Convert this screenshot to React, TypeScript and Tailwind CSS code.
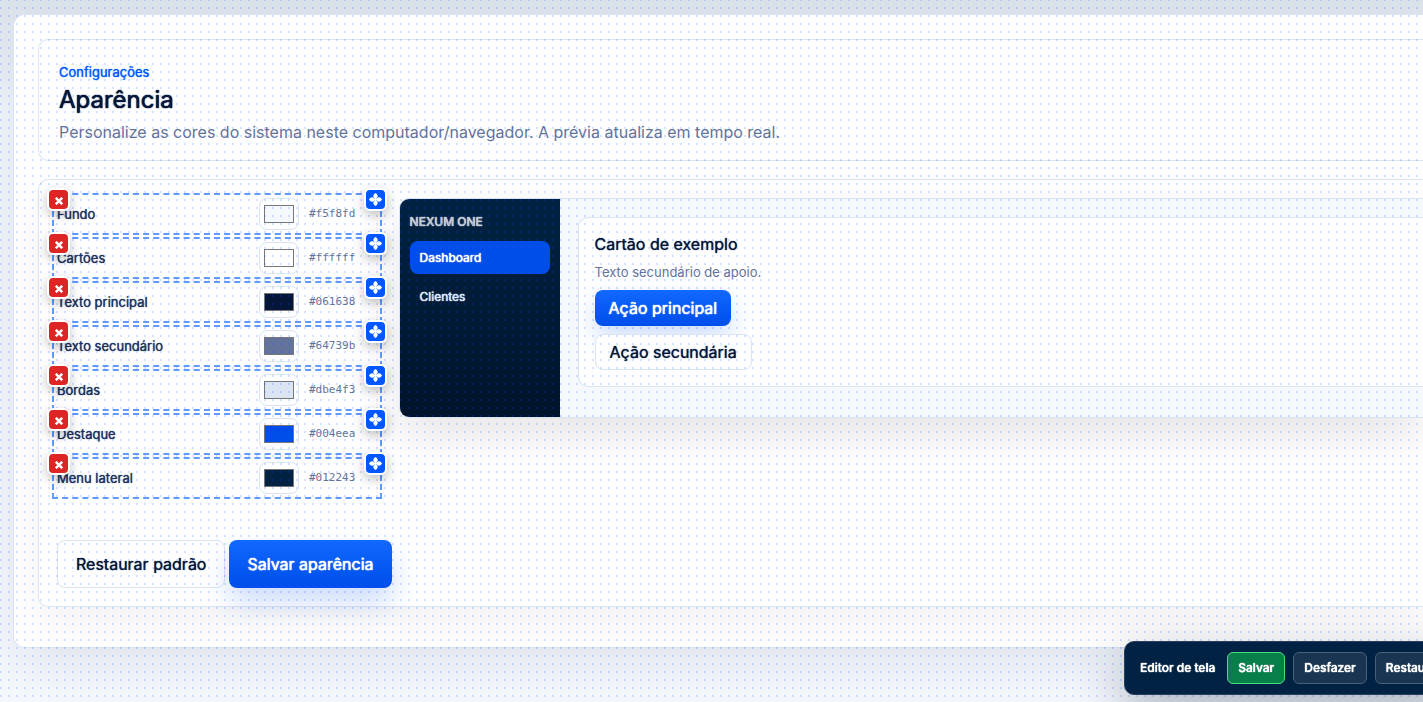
interface ThemeColor {
  id: string
  label: string
  value: string
}

const colors: ThemeColor[] = [
  { id: "fundo", label: "Fundo", value: "#f5f8fd" },
  { id: "cartoes", label: "Cartões", value: "#ffffff" },
  { id: "texto-principal", label: "Texto principal", value: "#061638" },
  { id: "texto-secundario", label: "Texto secundário", value: "#64739b" },
  { id: "bordas", label: "Bordas", value: "#dbe4f3" },
  { id: "destaque", label: "Destaque", value: "#004eea" },
  { id: "menu-lateral", label: "Menu lateral", value: "#012243" },
]

// peso extra sem mudar a largura das letras
const strong = "[text-shadow:0_0_1px_currentColor]"
const strongLight = "[text-shadow:0_0_1px_currentColor,0_0_1px_currentColor]"

function ColorRow({ id, label, value }: ThemeColor) {
  return (
    <div className="relative grid h-8 w-80 grid-cols-[1fr_40px_68px] items-center gap-[10px] outline-2 outline-offset-3 outline-dashed outline-[#6199ff]">
      <label htmlFor={id} className={`text-[13px] leading-5 text-[#1d305c] ${strong}`}>
        {label}
      </label>
      <input
        id={id}
        type="color"
        defaultValue={value}
        className="h-8 w-10 rounded-lg border border-[#dbe4f3] bg-white px-0.5 py-0.5"
      />
      <code className="font-['DejaVu_Sans_Mono',monospace] text-[11px] leading-5 text-[#64739b]">{value}</code>
      <button
        type="button"
        aria-label={`Remover ${label}`}
        className="absolute -top-[10px] -left-[10px] z-20 flex size-[23px] items-center justify-center rounded-md border-2 border-white bg-[#dc2626] text-white shadow-[0_4px_12px_rgba(0,0,0,0.25)]"
      >
        <svg viewBox="0 0 8 8" className="mt-0.5 size-2" stroke="currentColor" strokeWidth="2.5">
          <path d="M.8.8l6.4 6.4M7.2.8L.8 7.2" />
        </svg>
      </button>
      <button
        type="button"
        aria-label={`Mover ${label}`}
        className="absolute -top-[10px] -right-[10px] z-20 flex size-[23px] items-center justify-center rounded-md border-2 border-white bg-[#0057ff] text-white shadow-[0_4px_12px_rgba(0,0,0,0.25)]"
      >
        <svg viewBox="0 0 12 12" className="size-[13px]" fill="currentColor">
          <path d="M6 0C7.5 1 8.2 2 8 3.2 7.8 4.4 6.6 4.6 6.6 5.4 7.4 5.4 7.6 4.2 8.8 4 10 3.8 11 4.5 12 6 11 7.5 10 8.2 8.8 8 7.6 7.8 7.4 6.6 6.6 6.6 6.6 7.4 7.8 7.6 8 8.8 8.2 10 7.5 11 6 12 4.5 11 3.8 10 4 8.8 4.2 7.6 5.4 7.4 5.4 6.6 4.6 6.6 4.4 7.8 3.2 8 2 8.2 1 7.5 0 6 1 4.5 2 3.8 3.2 4 4.4 4.2 4.6 5.4 5.4 5.4 5.4 4.6 4.2 4.4 4 3.2 3.8 2 4.5 1 6 0Z" />
        </svg>
      </button>
    </div>
  )
}

function Preview() {
  return (
    <section className="flex min-h-[220px] flex-1 self-start overflow-hidden rounded-l-[10px] border border-r-0 border-[#dbe4f3] bg-[#f5f8fd] shadow-[0_18px_45px_rgba(0,0,0,0.1)]">
      <aside
        className={`flex w-40 shrink-0 flex-col gap-1.5 bg-linear-to-b from-[#012243] to-[#00142b] p-[10px] text-xs ${strongLight}`}
      >
        <span className="leading-[26px] font-medium text-[#c3cbd4]">NEXUM ONE</span>
        <a href="#dashboard" className="rounded-lg bg-[#004eea] px-[10px] leading-[33px] text-white">
          Dashboard
        </a>
        <a href="#clientes" className="rounded-lg px-[10px] leading-[33px] text-[#dbe9fb]">
          Clientes
        </a>
      </aside>
      <div className="flex-1 py-[18px] pl-[18px]">
        <div className="flex flex-col items-start gap-2 rounded-l-[10px] border border-r-0 border-[#dbe4f3] bg-white p-4">
          <h2 className={`text-base leading-5 ${strong}`}>Cartão de exemplo</h2>
          <p className="text-[13px] leading-5 text-[#64739b]">Texto secundário de apoio.</p>
          <button
            type="button"
            className={`h-9 rounded-lg bg-linear-to-b from-[#1268ff] to-[#004eea] px-3.5 text-white shadow-[0_10px_24px_rgba(0,78,234,0.2)] ${strongLight}`}
          >
            Ação principal
          </button>
          <button type="button" className={`h-9 rounded-lg border border-[#dbe4f3] bg-white px-3.5 ${strong}`}>
            Ação secundária
          </button>
        </div>
      </div>
    </section>
  )
}

function EditorBar() {
  return (
    <div
      className={`fixed bottom-[7px] left-[1124px] z-30 flex items-center gap-2 rounded-[10px] border border-[#29415d] bg-[#012243] px-[15px] py-[10px] text-xs font-medium whitespace-nowrap text-white shadow-[0_18px_50px_rgba(1,18,50,0.3)] ${strongLight}`}
    >
      <span className="mr-1">Editor de tela</span>
      <button type="button" className={`h-8 rounded-md border border-[#4ade80] bg-[#087f4b] px-[10px] ${strongLight}`}>
        Salvar
      </button>
      <button type="button" className={`h-8 rounded-md border border-[#4b6078] bg-[#1a3552] px-[10px] ${strongLight}`}>
        Desfazer
      </button>
      <button type="button" className={`h-8 rounded-md border border-[#4b6078] bg-[#1a3552] px-[10px] ${strongLight}`}>
        Restaurar
      </button>
    </div>
  )
}

export default function App() {
  return (
    <div className="relative min-h-screen overflow-hidden bg-linear-to-b from-[#dce2eb] via-[#f1f5fb] via-15% to-[#f5f8fd] pt-[14px] pl-[13px] font-[Inter,sans-serif] text-[#061638]">
      <main className="flex flex-col gap-[18px] rounded-l-xl border border-r-0 border-[#dbe4f3] bg-white pt-6 pb-10 pl-6 shadow-[0_18px_50px_rgba(6,22,56,0.08)]">
        <header className="rounded-l-[10px] border border-r-0 border-[#dbe4f3] bg-white px-5 pt-5 pb-3">
          <p className={`text-[13px] leading-6 text-[#0057ff] ${strong}`}>Configurações</p>
          <h1 className={`text-2xl leading-8 ${strongLight}`}>Aparência</h1>
          <p className="text-base leading-8 text-[#64739b]">
            Personalize as cores do sistema neste computador/navegador. A prévia atualiza em tempo real.
          </p>
        </header>

        <section className="flex gap-[7px] rounded-l-[10px] border border-r-0 border-[#dbe4f3] bg-white py-[18px] pl-[18px] shadow-[0_18px_45px_rgba(0,0,0,0.05)]">
          <div className="flex flex-col gap-[46px]">
            <div className="flex flex-col gap-3">
              {colors.map((color) => (
                <ColorRow key={color.id} {...color} />
              ))}
            </div>
            <div className="flex gap-1">
              <button
                type="button"
                className={`h-12 rounded-lg border border-[#dbe4f3] bg-white px-[18px] ${strong}`}
              >
                Restaurar padrão
              </button>
              <button
                type="button"
                className={`h-12 rounded-lg bg-linear-to-b from-[#1268ff] to-[#004eea] px-[18px] text-white shadow-[0_14px_28px_rgba(0,78,234,0.2)] ${strongLight}`}
              >
                Salvar aparência
              </button>
            </div>
          </div>
          <Preview />
        </section>
      </main>

      {/* grade de pontos do modo de edição */}
      <div className="pointer-events-none absolute inset-x-0 -top-px bottom-0 z-10 bg-[conic-gradient(from_270deg_at_2px_2px,rgba(0,87,255,0.17)_90deg,transparent_0)] bg-size-[8px_8px]" />
      <EditorBar />
    </div>
  )
}
